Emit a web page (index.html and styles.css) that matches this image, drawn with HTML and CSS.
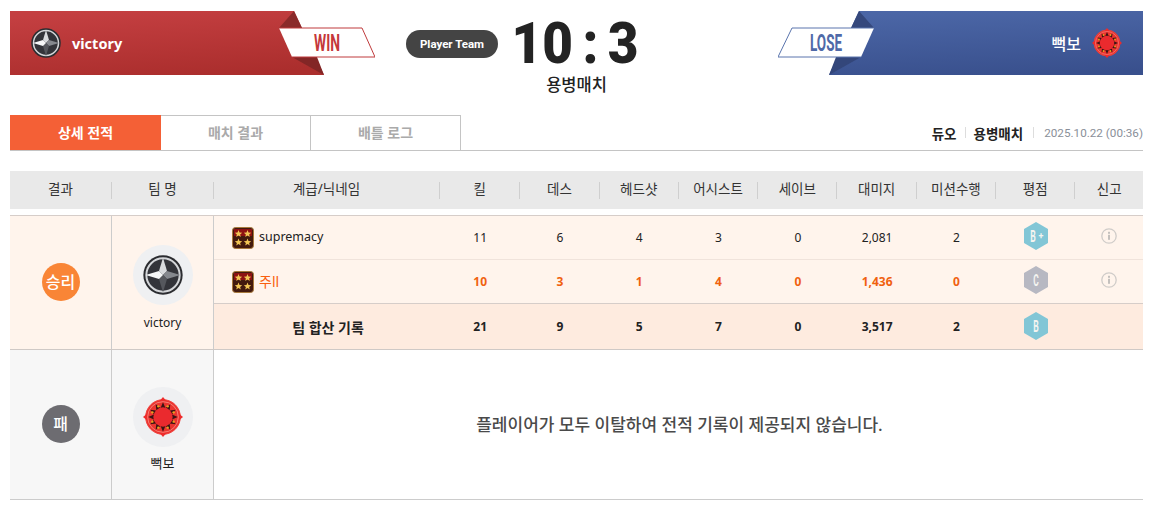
FILE: index.html
```html
<!DOCTYPE html>
<html lang="ko">
<head>
  <meta charset="UTF-8">
  <title>Match Detail</title>
  <link rel="stylesheet" href="styles.css">
</head>
<body>

  <!-- Shared drawings -->
  <svg class="defs" width="0" height="0">
    <defs>
      <linearGradient id="red-bg" x1="0.3" y1="0" x2="0.6" y2="1">
        <stop offset="0" stop-color="#c43f41"/>
        <stop offset="1" stop-color="#ab2e2d"/>
      </linearGradient>
      <linearGradient id="blue-bg" x1="0.4" y1="0" x2="0.6" y2="1">
        <stop offset="0" stop-color="#4b66a6"/>
        <stop offset="1" stop-color="#39508d"/>
      </linearGradient>
      <symbol id="logo-victory" viewBox="0 0 60 60">
        <circle cx="30" cy="30" r="29.5" fill="#2b2c30"/>
        <circle cx="30" cy="30" r="25" fill="#33343a" stroke="#d4d6d9" stroke-width="3"/>
        <polygon points="30,4 36,24 30,30 24,24" fill="#d9dbde"/>
        <polygon points="56,30 36,24 30,30 36,36" fill="#85888e"/>
        <polygon points="30,56 36,36 30,30 24,36" fill="#55575d"/>
        <polygon points="4,30 24,24 30,30 24,36" fill="#f6f7f8"/>
      </symbol>
      <symbol id="logo-red" viewBox="0 0 60 60">
        <circle cx="30" cy="30" r="26" fill="#ea342f" stroke="#f2403c" stroke-width="1.5"/>
        <circle cx="30" cy="30" r="23" fill="none" stroke="#ff9d94" stroke-width="1"/>
        <polygon points="30,0 35,6 25,6" fill="#ee2b2b"/>
        <polygon points="60,30 54,35 54,25" fill="#ee2b2b"/>
        <polygon points="30,60 25,54 35,54" fill="#ee2b2b"/>
        <polygon points="0,30 6,25 6,35" fill="#ee2b2b"/>
        <polygon points="52,30 43.5,33.6 49.1,41 39.9,39.9 41,49.1 33.6,43.5 30,52 26.4,43.5 19,49.1 20.1,39.9 10.9,41 16.5,33.6 8,30 16.5,26.4 10.9,19 20.1,20.1 19,10.9 26.4,16.5 30,8 33.6,16.5 41,10.9 39.9,20.1 49.1,19 43.5,26.4" fill="#3a1414"/>
        <circle cx="30" cy="30" r="14.5" fill="#ea2a2e"/>
        <g fill="#eba21e">
          <circle cx="46" cy="37" r="1.8"/><circle cx="37" cy="46" r="1.8"/><circle cx="23" cy="46" r="1.8"/><circle cx="14" cy="37" r="1.8"/>
          <circle cx="14" cy="23" r="1.8"/><circle cx="23" cy="14" r="1.8"/><circle cx="37" cy="14" r="1.8"/><circle cx="46" cy="23" r="1.8"/>
        </g>
      </symbol>
      <symbol id="rank-badge" viewBox="0 0 22 22">
        <rect x="0.5" y="0.5" width="21" height="21" rx="3" fill="#431a0e" stroke="#a87a3c"/>
        <rect x="2" y="2" width="18" height="7" fill="#8e1212"/>
        <g fill="#f2c655">
          <polygon id="rank-star" points="6.5,3 7.5,5.6 10.2,5.7 8.1,7.4 8.8,10 6.5,8.5 4.2,10 4.9,7.4 2.8,5.7 5.5,5.6"/>
          <use href="#rank-star" x="9"/>
          <use href="#rank-star" y="8.5"/>
          <use href="#rank-star" x="9" y="8.5"/>
        </g>
      </symbol>
      <symbol id="info-icon" viewBox="0 0 16 16">
        <circle cx="8" cy="8" r="7.2" fill="none" stroke="#d0ccc9" stroke-width="1.3"/>
        <rect x="7" y="6.8" width="2" height="5" fill="#c4c0bd"/>
        <rect x="7" y="3.8" width="2" height="2" fill="#c4c0bd"/>
      </symbol>
    </defs>
  </svg>

  <!-- Score header -->
  <div class="hero">
    <div class="banner">
      <svg class="banner-bg" viewBox="0 0 365 64" width="365" height="64">
        <polygon points="0,0 284,0 314,64 0,64" fill="url(#red-bg)"/>
        <polygon points="284,0 269,17 292,17" fill="#8a2a2a"/>
        <polygon points="282,46 307,46 314,64" fill="#832626"/>
        <polygon points="269,17 352,17 365,46 282,46" fill="#fff"/>
        <polyline points="269,17 352,17 365,46 282,46" fill="none" stroke="#bf3a3c"/>
        <text class="ribbon-text win-text" x="317" y="40" text-anchor="middle" textLength="26" lengthAdjust="spacingAndGlyphs">WIN</text>
      </svg>
      <svg class="banner-logo"><use href="#logo-victory"/></svg>
      <span class="banner-name">victory</span>
    </div>

    <div class="score-box">
      <span class="pill">Player Team</span>
      <div class="score-col">
        <div class="score">10 : 3</div>
        <div class="match-type">용병매치</div>
      </div>
    </div>

    <div class="banner banner-lose">
      <svg class="banner-bg" viewBox="0 0 365 64" width="365" height="64">
        <polygon points="81,0 365,0 365,64 51,64" fill="url(#blue-bg)"/>
        <polygon points="81,0 73,17 96,17" fill="#35487c"/>
        <polygon points="58,46 83,46 51,64" fill="#33467a"/>
        <polygon points="14,17 96,17 83,46 0,46" fill="#fff"/>
        <polyline points="96,17 14,17 0,46 83,46" fill="none" stroke="#5a74ad"/>
        <text class="ribbon-text lose-text" x="48" y="40" text-anchor="middle" textLength="32" lengthAdjust="spacingAndGlyphs">LOSE</text>
      </svg>
      <span class="banner-name name-kr">뻑보</span>
      <svg class="banner-logo"><use href="#logo-red"/></svg>
    </div>
  </div>

  <!-- Tabs -->
  <div class="tab-bar">
    <a class="tab active">상세 전적</a>
    <a class="tab">매치 결과</a>
    <a class="tab">배틀 로그</a>
    <div class="meta">
      <b>듀오</b><i></i><b>용병매치</b><i class="wide"></i><span>2025.10.22 (00:36)</span>
    </div>
  </div>

  <!-- Table head -->
  <div class="table-head">
    <div>결과</div>
    <div>팀 명</div>
    <div>계급/닉네임</div>
    <div>킬</div>
    <div>데스</div>
    <div>헤드샷</div>
    <div>어시스트</div>
    <div>세이브</div>
    <div>대미지</div>
    <div>미션수행</div>
    <div>평점</div>
    <div>신고</div>
  </div>

  <div class="result-table">
    <!-- Winning team -->
    <div class="team-block win">
      <div class="side-cell result-cell"><span class="result-badge">승리</span></div>
      <div class="side-cell team-cell">
        <span class="logo-round"><svg class="team-logo"><use href="#logo-victory"/></svg></span>
        <span class="team-name">victory</span>
      </div>
      <div class="players">
        <div class="row">
          <div class="nick"><svg class="rank"><use href="#rank-badge"/></svg><span>supremacy</span></div>
          <div>11</div><div>6</div><div>4</div><div>3</div><div>0</div><div>2,081</div><div>2</div>
          <div><svg class="hex" viewBox="0 0 24 28"><polygon points="12,0 24,7 24,21 12,28 0,21 0,7" fill="#82c6d6"/><text x="9" y="20" text-anchor="middle" class="hex-text" textLength="5.5" lengthAdjust="spacingAndGlyphs">B</text><text x="17" y="17" text-anchor="middle" class="hex-plus">+</text></svg></div>
          <div><svg class="info"><use href="#info-icon"/></svg></div>
        </div>
        <div class="row me">
          <div class="nick"><svg class="rank"><use href="#rank-badge"/></svg><span>주ll</span></div>
          <div>10</div><div>3</div><div>1</div><div>4</div><div>0</div><div>1,436</div><div>0</div>
          <div><svg class="hex" viewBox="0 0 24 28"><polygon points="12,0 24,7 24,21 12,28 0,21 0,7" fill="#b7b8c2"/><text x="12" y="20" text-anchor="middle" class="hex-text" textLength="5.5" lengthAdjust="spacingAndGlyphs">C</text></svg></div>
          <div><svg class="info"><use href="#info-icon"/></svg></div>
        </div>
        <div class="row total">
          <div class="total-label">팀 합산 기록</div>
          <div>21</div><div>9</div><div>5</div><div>7</div><div>0</div><div>3,517</div><div>2</div>
          <div><svg class="hex" viewBox="0 0 24 28"><polygon points="12,0 24,7 24,21 12,28 0,21 0,7" fill="#82c6d6"/><text x="12" y="20" text-anchor="middle" class="hex-text" textLength="5.5" lengthAdjust="spacingAndGlyphs">B</text></svg></div>
          <div></div>
        </div>
      </div>
    </div>

    <!-- Losing team -->
    <div class="team-block lose">
      <div class="side-cell result-cell"><span class="result-badge">패</span></div>
      <div class="side-cell team-cell">
        <span class="logo-round"><svg class="team-logo"><use href="#logo-red"/></svg></span>
        <span class="team-name name-kr">뻑보</span>
      </div>
      <div class="no-record">플레이어가 모두 이탈하여 전적 기록이 제공되지 않습니다.</div>
    </div>
  </div>

</body>
</html>
```

FILE: styles.css
```css
/* Global Styles */
body {
  font-family: "Noto Sans", "Noto Sans CJK KR", sans-serif;
  color: #222;
  background-color: #fff;
  margin: 0;
  padding: 11px 7px 0 10px;
  font-size: 13px;
}

.defs {
  position: absolute;
}

/* Score header */
.hero {
  display: flex;
  height: 64px;
  margin-bottom: 40px;
}

.banner {
  position: relative;
  width: 365px;
  height: 64px;
  display: flex;
  align-items: center;
  padding-left: 21px;
  box-sizing: border-box;
}

.banner-bg {
  position: absolute;
  left: 0;
  top: 0;
}

.banner-logo {
  position: relative;
  width: 30px;
  height: 30px;
}

.banner-name {
  position: relative;
  margin-left: 11px;
  color: #fff;
  font-size: 14.5px;
  font-weight: 700;
}

.banner-lose {
  margin-left: auto;
  justify-content: flex-end;
  padding: 0 21px 0 0;
}

.banner-lose .banner-name {
  margin: 0 11px 0 0;
  font-size: 16px;
  font-weight: 500;
}

.ribbon-text {
  font-family: "Roboto", sans-serif;
  font-weight: 700;
  font-size: 23px;
}

.win-text {
  fill: #c5383a;
}

.lose-text {
  fill: #4f69a8;
}

.score-box {
  display: flex;
  margin-left: 31px;
}

.pill {
  width: 92px;
  height: 28px;
  margin-top: 19px;
  border-radius: 14px;
  background-color: #444;
  color: #fff;
  font-family: "Roboto", sans-serif;
  font-size: 11.5px;
  font-weight: 700;
  line-height: 28px;
  text-align: center;
}

.score-col {
  width: 124px;
  margin-left: 15px;
  text-align: center;
}

.score {
  display: flex;
  justify-content: center;
  margin-top: 3px;
  font-family: "Roboto", sans-serif;
  font-size: 57px;
  font-weight: 900;
  line-height: 60px;
  color: #232323;
  white-space: pre;
  word-spacing: -4px;
  transform: scaleX(0.93);
}

.match-type {
  margin-top: 1px;
  padding-left: 3px;
  font-size: 16.5px;
  font-weight: 500;
  line-height: 20px;
  white-space: nowrap;
}

/* Tabs */
.tab-bar {
  display: flex;
  align-items: center;
  height: 35px;
  border-bottom: 1px solid #c4c4c4;
}

.tab {
  width: 149px;
  height: 34px;
  border: 1px solid #c4c4c4;
  border-left: none;
  font-size: 14px;
  line-height: 34px;
  text-align: center;
  color: #aaa;
  font-weight: 700;
}

.tab.active {
  width: 151px;
  height: 35px;
  border: none;
  background-color: #f46036;
  line-height: 35px;
  color: #fff;
}

.meta {
  margin-left: auto;
  display: flex;
  align-items: center;
  font-size: 13.5px;
}

.meta b {
  font-weight: 700;
  color: #222;
}

.meta i {
  width: 1px;
  height: 11px;
  margin: 0 8px;
  background-color: #ddd;
}

.meta i.wide {
  margin: 0 10px;
}

.meta span {
  font-family: "Roboto", sans-serif;
  font-size: 11.7px;
  color: #8a8f99;
}

/* Table head */
.table-head,
.team-block {
  display: grid;
  grid-template-columns: 102px 102px 1fr;
}

.table-head {
  grid-template-columns: 102px 102px 226px 80.3px repeat(7, 79.3px) 1fr;
  height: 38px;
  margin: 20px 0 6px;
  background-color: #e9e9e9;
  align-items: center;
}

.table-head div {
  text-align: center;
  font-size: 13.5px;
  line-height: 15px;
  padding-bottom: 2px;
  color: #333;
  border-right: 1px solid #cfcfcf;
}

.table-head div:last-child {
  border-right: none;
}

/* Result table */
.result-table {
  border-top: 1px solid #d6cdc9;
}

.team-block.win {
  height: 133px;
  background-color: #fff4ec;
  border-bottom: 1px solid #cfc9c6;
}

.team-block.lose {
  height: 149px;
  border-bottom: 1px solid #ccc;
}

.side-cell {
  display: flex;
  align-items: center;
  justify-content: center;
  border-right: 1px solid #ccc;
}

.result-cell {
  padding-bottom: 2px;
}

.lose .side-cell {
  background-color: #f7f7f7;
}

.result-badge {
  width: 38px;
  height: 38px;
  border-radius: 50%;
  background-color: #f98536;
  color: #fff;
  font-size: 16px;
  font-weight: 500;
  line-height: 38px;
  text-align: center;
}

.lose .result-badge {
  background-color: #6d6c71;
}

.team-cell {
  flex-direction: column;
  padding-top: 11px;
}

.logo-round {
  display: flex;
  align-items: center;
  justify-content: center;
  width: 60px;
  height: 60px;
  border-radius: 50%;
  background-color: #eff0f2;
}

.team-logo {
  width: 40px;
  height: 40px;
}

.team-name {
  margin-top: 9px;
  font-size: 12px;
  line-height: 18px;
}

.team-name.name-kr {
  margin-top: 7px;
  margin-bottom: 2px;
  font-size: 13px;
}

.players {
  display: flex;
  flex-direction: column;
}

.row {
  display: grid;
  grid-template-columns: 226px 80.3px repeat(7, 79.3px) 1fr;
  align-items: center;
  height: 43px;
  border-bottom: 1px solid #f0e3db;
  text-align: center;
  font-size: 12px;
}

.row svg {
  display: block;
  margin: 0 auto 3px;
}

.row.total svg {
  margin-bottom: 1px;
}

.row .nick {
  display: flex;
  align-items: center;
  padding-left: 18px;
  text-align: left;
  font-size: 12.5px;
}

.nick span {
  padding-bottom: 3px;
}

.row .nick .rank {
  width: 22px;
  height: 22px;
  margin: 0 5px 0 0;
}

.row.me {
  color: #f0610f;
  font-weight: 700;
  border-bottom-color: #d6cdc9;
}

.row.me .nick {
  font-weight: 400;
  font-size: 14px;
  color: #f95f0f;
}

.row.me .nick span {
  padding-bottom: 1px;
}

.row.total {
  flex: 1;
  height: auto;
  background-color: #feebdf;
  border-bottom: none;
  font-weight: 700;
}

.total-label {
  font-size: 14px;
  padding-left: 2px;
}

.hex {
  width: 24px;
  height: 28px;
}

.hex-text {
  font-family: "Roboto", sans-serif;
  font-size: 16.5px;
  font-weight: 700;
  fill: #f4f4f0;
}

.hex-plus {
  font-family: "Roboto", sans-serif;
  font-size: 9px;
  font-weight: 700;
  fill: #f4f4f0;
}

.info {
  width: 16px;
  height: 16px;
}

.no-record {
  display: flex;
  align-items: center;
  justify-content: center;
  padding: 0 0 2px 2px;
  font-size: 17px;
  font-weight: 500;
  color: #4a4a4a;
}
```
